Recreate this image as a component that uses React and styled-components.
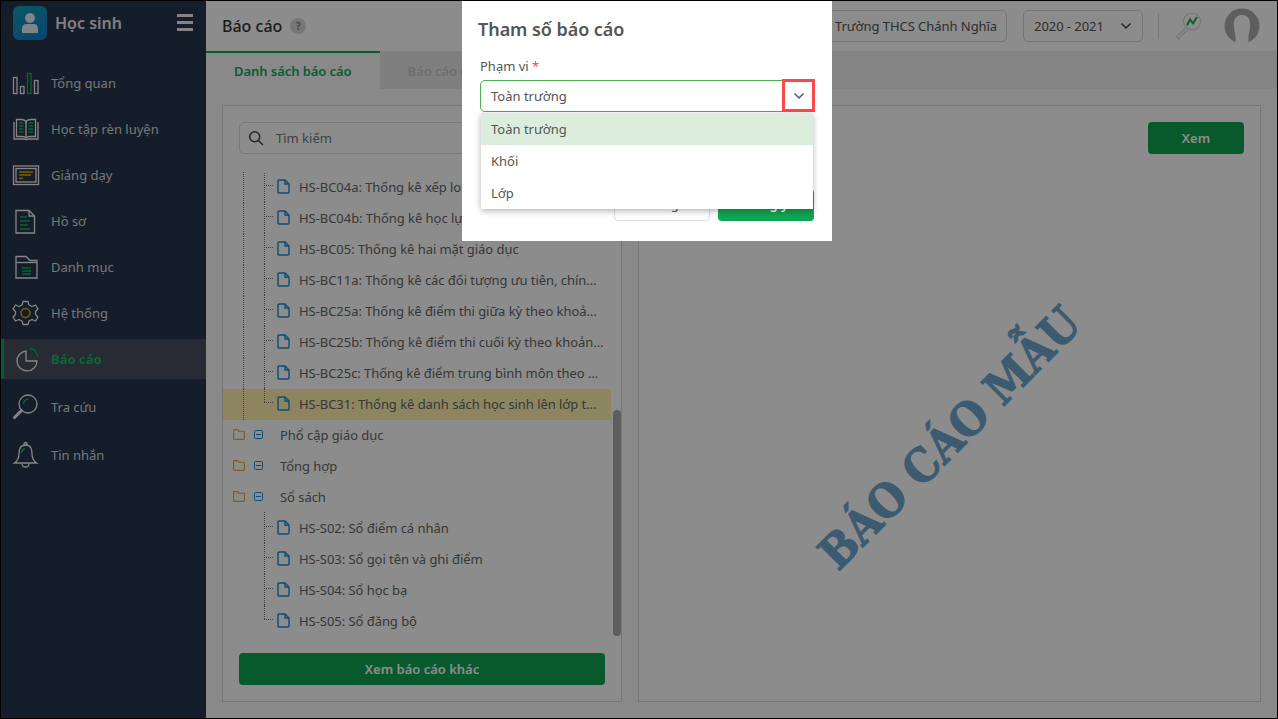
import React from "react";
import styled, { createGlobalStyle } from "styled-components";

const Global = createGlobalStyle`
  html, body { margin: 0; padding: 0; background: #000; }
  * { box-sizing: border-box; }
  body { font-family: "Noto Sans", "Open Sans", sans-serif; font-size: 13px; color: #555; }
`;

const GREEN = "#10a552";

const Frame = styled.div`
  position: relative; width: 1278px; height: 719px; border: 1px solid #000;
  display: flex; overflow: hidden; background: #fafafa;
`;
const Sidebar = styled.aside`
  width: 205px; flex: none; background: #28364e; color: #e8ecf0;
  display: flex; flex-direction: column;
`;
const Brand = styled.div`
  display: flex; align-items: center; height: 59px; padding: 0 13px 16px 12px; gap: 8px;
`;
const Logo = styled.div`
  width: 34px; height: 34px; border-radius: 6px; flex: none;
  background: linear-gradient(150deg, #149fb0, #0f7fd0);
  display: flex; align-items: center; justify-content: center;
`;
const BrandName = styled.div`
  flex: 1; font-size: 16px; font-weight: 600; color: #e8e8e8; line-height: 22px;
`;
const Burger = styled.div`
  width: 16px; height: 17px; display: flex; flex-direction: column; justify-content: space-between;
  span { display: block; height: 3px; background: #f0f0f0; }
`;
const Menu = styled.nav`display: flex; flex-direction: column;`;
const MenuRow = styled.div`
  display: flex; align-items: center; gap: 11px; padding-left: 11px;
  height: ${p => (p.$active ? "40px" : p.$tall ? "48px" : "46px")};
  margin: ${p => (p.$active ? "3px 0 4px" : "0")};
  font-size: 13px; font-weight: ${p => (p.$active ? 700 : 400)};
  color: ${p => (p.$active ? "#18b864" : "#d6d9dd")};
  background: ${p => (p.$active ? "#454f5f" : "transparent")};
  box-shadow: ${p => (p.$active ? "inset 3px 0 0 #12a858" : "none")};
  svg { flex: none; }
`;
const Main = styled.main`flex: 1; min-width: 0; display: flex; flex-direction: column;`;
const TopBar = styled.header`
  height: 50px; flex: none; background: #fff; display: flex; align-items: center; padding: 0 17px 0 16px;
`;
const PageTitle = styled.h1`
  margin: 0; font-size: 16px; font-weight: 500; color: #333; line-height: 22px;
`;
const Help = styled.span`
  width: 16px; height: 16px; border-radius: 50%; background: #d8d8d8; color: #777;
  font-size: 10px; font-weight: 600; display: flex; align-items: center; justify-content: center; margin-left: 8px;
`;
const TopRight = styled.div`margin-left: auto; display: flex; align-items: center;`;
const SelectBox = styled.div`
  height: 32px; width: ${p => p.$w}px; border: 1px solid #d4d4d4; border-radius: 5px;
  display: flex; align-items: center; justify-content: space-between; padding: 0 10px;
  font-size: 13px; color: #555; margin-right: ${p => p.$mr || 0}px; white-space: nowrap; letter-spacing: -0.05px;
`;
const Divider = styled.div`width: 1px; height: 26px; background: #dcdcdc; margin: 0 14px 0 15px;`;
const AvatarWrap = styled.div`margin-left: 21px; width: 36px; height: 36px;`;
const Tabs = styled.div`height: 38px; flex: none; display: flex; background: #f1f1f1;`;
const Tab = styled.div`
  padding: 0 28px; display: flex; align-items: center; font-size: 13px; font-weight: 600; letter-spacing: -0.06px;
  color: ${p => (p.$active ? "#12a858" : "#c8c8c8")};
  background: ${p => (p.$active ? "#fafafa" : "#e8e8e8")};
  border-top: 2px solid ${p => (p.$active ? "#12a858" : "transparent")};
`;
const Content = styled.div`flex: 1; min-height: 0; display: flex; gap: 16px; padding: 16px;`;
const Panel = styled.section`
  position: relative; background: #fff; border: 1px solid #d9d9d9; display: flex; flex-direction: column; min-width: 0;
  ${p => (p.$fixed ? "width: 400px; flex: none;" : "flex: 1;")}
`;
const Search = styled.div`
  height: 32px; margin: 16px 16px 18px; border: 1px solid #dcdcdc; border-radius: 5px; flex: none;
  display: flex; align-items: center; gap: 12px; padding-left: 8px; color: #777; font-size: 13px;
`;
const Tree = styled.div`position: relative; flex: 1; min-height: 0; overflow: hidden;`;
const Row = styled.div`
  position: relative; height: 31px; margin-right: 10px; padding-bottom: 2px; display: flex; align-items: center;
  font-size: 13px; letter-spacing: -0.05px; color: #666; white-space: nowrap;
  background: ${p => (p.$hl ? "#fff3ad" : "transparent")};
`;
const ChildRow = styled(Row)`
  padding-left: 54px; padding-right: 7px; gap: 9px;
  &::before {
    content: ""; position: absolute; left: 41px; top: -1px; border-left: 1px dotted #777;
    height: ${p => (p.$last ? "14px" : "31px")};
  }
  &::after {
    content: ""; position: absolute; left: 41px; top: 13px; width: 9px; border-top: 1px dotted #777;
  }
`;
const OuterLine = styled.span`
  position: absolute; left: 20px; top: 0; bottom: 0; border-left: 1px dotted #777;
`;
const RowText = styled.span`flex: 1; min-width: 0; overflow: hidden; text-overflow: ellipsis;`;
const GroupRow = styled(Row)`padding-left: 10px; gap: 9px;`;
const GroupText = styled.span`margin-left: 8px;`;
const Thumb = styled.div`
  position: absolute; right: 0; top: 238px; width: 8px; height: 226px; background: #aaa; border-radius: 4px;
`;
const Btn = styled.button`
  height: 32px; border: 0; border-radius: 4px; background: ${GREEN}; color: #fff;
  font: 600 13px "Noto Sans", sans-serif; flex: none;
`;
const WideBtn = styled(Btn)`margin: 16px 16px 16px;`;
const XemRow = styled.div`display: flex; justify-content: flex-end; padding: 16px 16px 0 0;`;
const XemBtn = styled(Btn)`width: 96px;`;
const Stage = styled.div`flex: 1; display: flex; align-items: center; justify-content: center;`;
const Watermark = styled.div`
  font-family: "DejaVu Serif", serif; font-stretch: condensed; font-weight: 700; font-size: 46px; line-height: 1;
  color: #6da5cc; white-space: nowrap; transform: translate(0px, 10px) rotate(-45deg);
  -webkit-text-stroke: 1px #6da5cc;
`;
const Overlay = styled.div`
  position: absolute; inset: 0; background: rgba(0,0,0,.45); padding-left: 461px;
`;
const Modal = styled.div`
  width: 370px; height: 240px; background: #fff; padding: 16px 18px 20px 16px; position: relative;
`;
const ModalTitle = styled.h2`
  margin: 0 0 16px; font-size: 18px; font-weight: 600; color: #555; line-height: 24px; letter-spacing: -0.05px;
`;
const Field = styled.div`position: relative; margin-left: 2px;`;
const Label = styled.div`font-size: 13px; line-height: 18px; color: #555; margin-bottom: 5px;`;
const Req = styled.span`color: #f44;`;
const Select = styled.div`
  position: relative; height: 32px; border: 1px solid #4caf50; border-radius: 5px; padding-left: 10px;
  display: flex; align-items: center; font-size: 13px; color: #555;
`;
const Caret = styled.div`
  position: absolute; right: -2px; top: -2px; width: 33px; height: 33px; border: 3px solid #ff4848;
  display: flex; align-items: center; justify-content: center;
`;
const Dropdown = styled.ul`
  position: absolute; z-index: 2; left: 1px; right: 1px; top: 56px; margin: 0; padding: 0; list-style: none;
  background: #fff; border-radius: 3px; box-shadow: 0 2px 6px rgba(0,0,0,.3);
`;
const Option = styled.li`
  height: 32px; padding-left: 10px; display: flex; align-items: center; font-size: 13px; color: #555;
  background: ${p => (p.$on ? "#dcedde" : "#fff")};
`;
const Footer = styled.div`display: flex; justify-content: flex-end; gap: 8px; margin-top: 77px;`;
const GhostBtn = styled(Btn)`width: 96px; background: #fff; color: #555; border: 1px solid #ddd; font-weight: 400; padding-bottom: 3px;`;
const PrimaryBtn = styled(Btn)`width: 96px; padding-bottom: 3px;`;

const S = "#f4f4f4";
const G = "#14b45e";
const Y = "#d9a010";
const Ic = ({ children }) => (
  <svg width="28" height="26" viewBox="0 0 28 26" fill="none" stroke={S} strokeWidth="1.3">{children}</svg>
);

const icons = {
  chart: <Ic><rect x="1.5" y="7.5" width="3.5" height="16" /><rect x="8.5" y="16.5" width="3.5" height="7" /><rect x="15.5" y="3.5" width="3.5" height="20" stroke={G} /><rect x="22.5" y="10.5" width="3.5" height="13" /></Ic>,
  book: <Ic><path d="M2 6 L2 23 H12 Q14 24 16 23 H26 V6" /><path d="M4.5 3.5 H9 Q13 3.5 14 6 Q15 3.5 19 3.5 H23.5 V20.5 H18 Q15 20.5 14 22 Q13 20.5 10 20.5 H4.5 Z" /><path d="M14 6 V22" /><path d="M7 7 H11.5 M7 10 H11.5 M7 13 H11.5 M7 16 H11.5 M16.5 7 H21 M16.5 10 H21 M16.5 13 H21 M16.5 16 H21" stroke={G} strokeWidth="1.6" /></Ic>,
  screen: <Ic><rect x="1.5" y="4" width="25" height="18.5" /><rect x="4" y="6.5" width="20" height="13.5" /><path d="M7 10 H21" stroke={Y} strokeWidth="1.6" /><path d="M7 13 H19" stroke={Y} strokeWidth="1.6" /><path d="M7 16.3 H11" stroke={Y} strokeWidth="1.6" /></Ic>,
  doc: <Ic><path d="M4 2.5 H17 L22.5 8 V25 H4 Z" /><path d="M17 2.5 V8 H22.5" /><path d="M8 9 H15 M8 13 H18 M8 17 H16 M8 21 H18" stroke={G} strokeWidth="1.4" /></Ic>,
  folder: <Ic><path d="M4 2.5 H14 L18 6.5 H25 V24 H4 Z" /><path d="M4 8.5 H25" /><path d="M10 14 H19 M10 17 H19 M10 20 H19" stroke={G} strokeWidth="1.4" /></Ic>,
  gear: <Ic><path d="M11 1.5 H16 L17 5 L20 6.5 L23.5 5 L26 9 L23.5 11.5 V14.5 L26 17 L23.5 21 L20 19.5 L17 21 L16 24.5 H11 L10 21 L7 19.5 L3.5 21 L1 17 L3.5 14.5 V11.5 L1 9 L3.5 5 L7 6.5 L10 5 Z" strokeLinejoin="round" /><circle cx="13.5" cy="13" r="4.5" stroke={Y} strokeWidth="1.6" /></Ic>,
  pie: <Ic><path d="M14 5 A10 10 0 1 0 25 15 H14 Z" /><path d="M17.5 2 A10 10 0 0 1 25.5 10.5" stroke={G} strokeWidth="1.6" /></Ic>,
  search: <Ic><circle cx="16" cy="10" r="9" /><path d="M9.5 16.5 L2.5 23.5" strokeWidth="3" strokeLinecap="round" /><path d="M11.5 10 A5 5 0 0 1 16.5 5" stroke={G} strokeWidth="1.6" /></Ic>,
  bell: <Ic><path d="M13.5 3 C8 3 7 7.5 7 11.5 C7 15.5 5.5 19 2.5 21 H24.5 C21.5 19 20 15.5 20 11.5 C20 7.5 19 3 13.5 3 Z" /><circle cx="13.5" cy="2" r="1.5" /><path d="M10 21.5 Q10 25 13.5 25 Q17 25 17 21.5" /><path d="M9.5 11 A5 5 0 0 1 13 6.5" stroke={G} strokeWidth="1.6" /></Ic>,
};

const nav = [
  ["chart", "Tổng quan"], ["book", "Học tập rèn luyện"], ["screen", "Giảng dạy"], ["doc", "Hồ sơ"],
  ["folder", "Danh mục"], ["gear", "Hệ thống"], ["pie", "Báo cáo", true], ["search", "Tra cứu", false, true], ["bell", "Tin nhắn", false, true],
];

const FileIcon = () => (
  <svg width="13" height="15" viewBox="0 0 13 15" fill="none" stroke="#1a8ad4" strokeWidth="1.4" style={{ flex: "none" }}>
    <path d="M1 2 Q1 1 2 1 H8 L12 5 V13 Q12 14 11 14 H2 Q1 14 1 13 Z" /><path d="M8 1 V5 H12" />
  </svg>
);
const FolderIcon = () => (
  <svg width="12" height="11" viewBox="0 0 12 11" fill="none" stroke="#e0a83a" strokeWidth="1.1" style={{ flex: "none" }}>
    <path d="M.6 1.5 Q.6 .6 1.5 .6 H4.5 L5.8 2.2 H10.5 Q11.4 2.2 11.4 3 V9.5 Q11.4 10.4 10.5 10.4 H1.5 Q.6 10.4 .6 9.5 Z" />
  </svg>
);
const MinusIcon = () => (
  <svg width="9" height="9" viewBox="0 0 9 9" fill="none" stroke="#1a8ad4" strokeWidth="1" style={{ flex: "none" }}>
    <rect x=".5" y=".5" width="8" height="8" rx="1" /><path d="M2 4.5 H7" />
  </svg>
);
const Chevron = ({ c = "#555570" }) => (
  <svg width="12" height="8" viewBox="0 0 12 8" fill="none" stroke={c} strokeWidth="1.5"><path d="M1.5 1.5 L6 6 L10.5 1.5" /></svg>
);

const upper = [
  "HS-BC04a: Thống kê xếp loại giáo dục",
  "HS-BC04b: Thống kê học lực, hạnh kiểm",
  "HS-BC05: Thống kê hai mặt giáo dục",
  "HS-BC11a: Thống kê các đối tượng ưu tiên, chính sách của học sinh",
  "HS-BC25a: Thống kê điểm thi giữa kỳ theo khoản điểm của học sinh",
  "HS-BC25b: Thống kê điểm thi cuối kỳ theo khoản điểm của học sinh",
  "HS-BC25c: Thống kê điểm trung bình môn theo khoản điểm của học sinh",
  "HS-BC31: Thống kê danh sách học sinh lên lớp thẳng của toàn trường",
];
const lower = ["HS-S02: Sổ điểm cá nhân", "HS-S03: Sổ gọi tên và ghi điểm", "HS-S04: Sổ học bạ", "HS-S05: Sổ đăng bộ"];
const groups = ["Phổ cập giáo dục", "Tổng hợp"];

export default function App() {
  return (
    <>
      <Global />
      <Frame>
        <Sidebar>
          <Brand>
            <Logo>
              <svg width="20" height="22" viewBox="0 0 20 22" fill="#e8f0f4"><circle cx="10" cy="6" r="5" /><path d="M2 21 Q1 12 6 12 H14 Q19 12 18 21 Z" /></svg>
            </Logo>
            <BrandName>Học sinh</BrandName>
            <Burger><span /><span /><span /></Burger>
          </Brand>
          <Menu>
            {nav.map(([k, label, active, tall]) => (
              <MenuRow key={k} $active={active} $tall={tall}>{icons[k]}<span>{label}</span></MenuRow>
            ))}
          </Menu>
        </Sidebar>
        <Main>
          <TopBar>
            <PageTitle>Báo cáo</PageTitle>
            <Help>?</Help>
            <TopRight>
              <SelectBox $w={183} $mr={16}><span>Trường THCS Chánh Nghĩa</span></SelectBox>
              <SelectBox $w={120}><span>2020 - 2021</span><Chevron c="#444" /></SelectBox>
              <Divider />
              <svg width="30" height="30" viewBox="0 0 30 30" fill="none" stroke="#d8d8d8" strokeWidth="1.2">
                <circle cx="19" cy="10.5" r="8.5" />
                <path d="M12.5 17 L3.5 26 L5.5 28 L14.5 19" />
                <path d="M14 14.5 L17 8.5 L20 12.5 L24 6" stroke={G} strokeWidth="2" />
              </svg>
              <AvatarWrap>
                <svg width="36" height="36" viewBox="0 0 36 36">
                  <circle cx="18" cy="18" r="17.5" fill="#ababab" />
                  <path d="M18 7 C11 7 9 13 10 19 C10.5 24 12 27 11.5 36 H24.5 C24 27 25.5 24 26 19 C27 13 25 7 18 7 Z" fill="#fff" />
                </svg>
              </AvatarWrap>
            </TopRight>
          </TopBar>
          <Tabs>
            <Tab $active>Danh sách báo cáo</Tab>
            <Tab>Báo cáo gần đây</Tab>
          </Tabs>
          <Content>
            <Panel $fixed>
              <Search>
                <svg width="16" height="16" viewBox="0 0 16 16" fill="none" stroke="#444" strokeWidth="1.5"><circle cx="6.7" cy="6.7" r="5" /><path d="M10.5 10.5 L15 15" /></svg>
                <span>Tìm kiếm</span>
              </Search>
              <Tree>
                {upper.map((t, i) => (
                  <ChildRow key={t} $hl={i === upper.length - 1} $last={i === upper.length - 1}>
                    <OuterLine />
                    <FileIcon /><RowText>{t}</RowText>
                  </ChildRow>
                ))}
                {groups.map(g => (
                  <GroupRow key={g}><FolderIcon /><MinusIcon /><GroupText>{g}</GroupText></GroupRow>
                ))}
                <GroupRow><FolderIcon /><MinusIcon /><GroupText>Sổ sách</GroupText></GroupRow>
                {lower.map((t, i) => (
                  <ChildRow key={t} $last={i === lower.length - 1}><FileIcon /><RowText>{t}</RowText></ChildRow>
                ))}
                <Thumb />
              </Tree>
              <WideBtn>Xem báo cáo khác</WideBtn>
            </Panel>
            <Panel>
              <XemRow><XemBtn>Xem</XemBtn></XemRow>
              <Stage><Watermark>BÁO CÁO MẪU</Watermark></Stage>
            </Panel>
          </Content>
        </Main>
        <Overlay>
          <Modal>
            <ModalTitle>Tham số báo cáo</ModalTitle>
            <Field>
              <Label>Phạm vi <Req>*</Req></Label>
              <Select>
                Toàn trường
                <Caret><Chevron /></Caret>
              </Select>
              <Dropdown>
                <Option $on>Toàn trường</Option>
                <Option>Khối</Option>
                <Option>Lớp</Option>
              </Dropdown>
              <Footer>
                <GhostBtn>Đóng</GhostBtn>
                <PrimaryBtn>Đồng ý</PrimaryBtn>
              </Footer>
            </Field>
          </Modal>
        </Overlay>
      </Frame>
    </>
  );
}
